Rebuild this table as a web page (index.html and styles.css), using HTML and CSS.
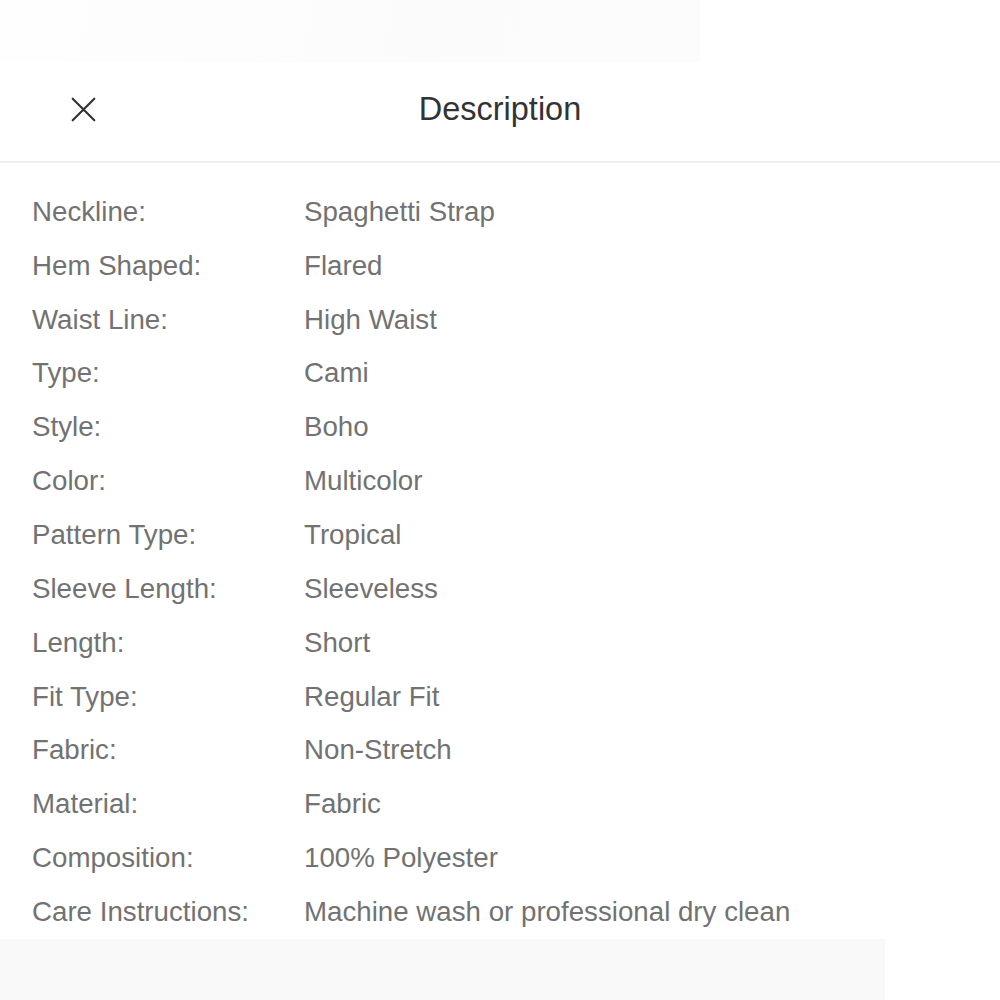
FILE: index.html
```html
<!DOCTYPE html>
<html>
<head>
<meta charset="utf-8">
<link rel="stylesheet" href="styles.css">
</head>
<body>
<div class="backdrop-top"><div class="shade"></div></div>
<section class="sheet">
  <header class="sheet-head">
    <button class="close" aria-label="Close">
      <svg width="30" height="30" viewBox="0 0 30 30"><path d="M3 3 L27 27 M27 3 L3 27" stroke="#333" stroke-width="2.4" stroke-linecap="round" fill="none"/></svg>
    </button>
    <h1 class="title">Description</h1>
  </header>
  <dl class="specs">
    <dt>Neckline:</dt><dd>Spaghetti Strap</dd>
    <dt>Hem Shaped:</dt><dd>Flared</dd>
    <dt>Waist Line:</dt><dd>High Waist</dd>
    <dt>Type:</dt><dd>Cami</dd>
    <dt>Style:</dt><dd>Boho</dd>
    <dt>Color:</dt><dd>Multicolor</dd>
    <dt>Pattern Type:</dt><dd>Tropical</dd>
    <dt>Sleeve Length:</dt><dd>Sleeveless</dd>
    <dt>Length:</dt><dd>Short</dd>
    <dt>Fit Type:</dt><dd>Regular Fit</dd>
    <dt>Fabric:</dt><dd>Non-Stretch</dd>
    <dt>Material:</dt><dd>Fabric</dd>
    <dt>Composition:</dt><dd>100% Polyester</dd>
    <dt>Care Instructions:</dt><dd>Machine wash or professional dry clean</dd>
  </dl>
</section>
<div class="backdrop-bottom"><div class="shade"></div></div>
</body>
</html>
```
FILE: styles.css
```css
html, body {
  margin: 0;
  padding: 0;
  background: #fff;
  font-family: "Liberation Sans", Arial, sans-serif;
}
.backdrop-top {
  height: 62px;
  background: #fff;
}
.backdrop-top .shade {
  width: 700px;
  height: 62px;
  background: linear-gradient(100deg, #fefefe 0%, #fdfdfd 30%, #fbfbfb 60%, #fcfcfc 100%);
}
.sheet {
  background: #fff;
}
.sheet-head {
  height: 99px;
  display: flex;
  align-items: center;
  justify-content: center;
  position: relative;
  border-bottom: 2px solid #efefef;
}
.close {
  position: absolute;
  left: 66px;
  top: 30px;
  width: 34px;
  height: 34px;
  padding: 2px;
  border: 0;
  background: none;
  display: flex;
  align-items: center;
  justify-content: center;
}
.close svg { width: 27px; height: 27px; }
.title {
  margin: 0;
  font-size: 32.5px;
  font-weight: normal;
  color: #333;
  transform: translateY(-2px);
}
.specs {
  margin: 0;
  padding: 22px 0 0 32px;
  display: grid;
  grid-template-columns: 272px 1fr;
  grid-auto-rows: 53.85px;
  align-items: center;
  font-size: 27.7px;
  color: #727272;
}
.specs dt, .specs dd {
  margin: 0;
  white-space: nowrap;
}
.backdrop-bottom {
  height: 62px;
  background: #fff;
}
.backdrop-bottom .shade {
  width: 885px;
  height: 62px;
  background: #f9f9f9;
}
```
